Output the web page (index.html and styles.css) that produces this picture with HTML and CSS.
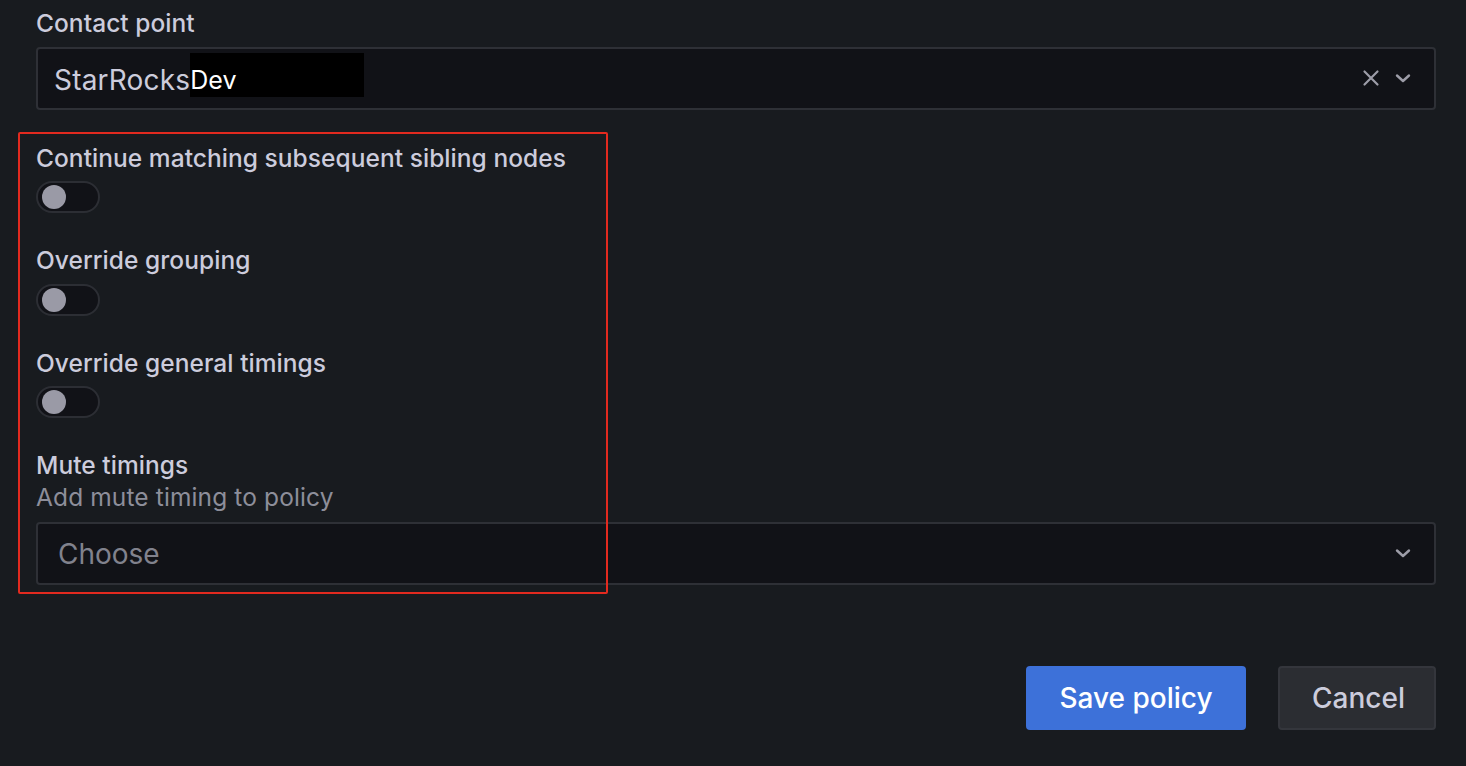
FILE: index.html
```html
<!DOCTYPE html>
<html lang="en">
<head>
<meta charset="utf-8">
<title>Notification policy</title>
<link rel="stylesheet" href="styles.css">
</head>
<body>
<div class="page">
  <form class="form">
    <div class="field field-contact">
      <label class="label">Contact point</label>
      <div class="select">
        <div class="select-value"><span class="value-text">StarRocks</span><span class="redact">Dev</span></div>
        <div class="select-icons">
          <svg class="icon-x" width="18" height="18" viewBox="0 0 18 18"><path d="M2.5 2.5 L15.5 15.5 M15.5 2.5 L2.5 15.5" stroke="#9d9da8" stroke-width="2.2" stroke-linecap="round" fill="none"/></svg>
          <svg class="icon-chev" width="18" height="18" viewBox="0 0 18 18"><path d="M3 6.5 L9 12 L15 6.5" stroke="#9d9da8" stroke-width="2.4" stroke-linecap="round" stroke-linejoin="round" fill="none"/></svg>
        </div>
      </div>
    </div>

    <div class="field">
      <label class="label">Continue matching subsequent sibling nodes</label>
      <div class="switch"><span class="knob"></span></div>
    </div>

    <div class="field">
      <label class="label">Override grouping</label>
      <div class="switch"><span class="knob"></span></div>
    </div>

    <div class="field">
      <label class="label">Override general timings</label>
      <div class="switch"><span class="knob"></span></div>
    </div>

    <div class="field field-mute">
      <label class="label label-tight">Mute timings</label>
      <div class="description">Add mute timing to policy</div>
      <div class="select">
        <div class="select-value placeholder">Choose</div>
        <div class="select-icons">
          <svg class="icon-chev" width="18" height="18" viewBox="0 0 18 18"><path d="M3 6.5 L9 12 L15 6.5" stroke="#9d9da8" stroke-width="2.4" stroke-linecap="round" stroke-linejoin="round" fill="none"/></svg>
        </div>
      </div>
    </div>

    <div class="actions">
      <button type="button" class="btn btn-primary">Save policy</button>
      <button type="button" class="btn btn-secondary">Cancel</button>
    </div>
  </form>
  <div class="annotation"></div>
</div>
</body>
</html>
```

FILE: styles.css
```css
* { box-sizing: border-box; }

html, body {
  margin: 0;
  padding: 0;
  background: #181b1f;
}

body {
  font-family: Inter, "Noto Sans", sans-serif;
  color: #ccccdc;
  width: 1466px;
  height: 766px;
  overflow: hidden;
}

.page {
  position: relative;
  padding: 8px 30px 0 36px;
}

.form {
  display: flex;
  flex-direction: column;
}

.field {
  display: flex;
  flex-direction: column;
  align-items: flex-start;
  margin-bottom: 32px;
}

.field-contact { margin-bottom: 33px; }

.field-mute { margin-bottom: 0; }

.label {
  font-size: 24.5px;
  font-weight: 500;
  line-height: 30.6px;
  letter-spacing: 0.05px;
  color: #ccccdc;
  margin-bottom: 8px;
}

.label-tight { margin-bottom: 1px; }

.description {
  font-size: 24.5px;
  font-weight: 400;
  line-height: 30.6px;
  letter-spacing: 0.12px;
  color: #8d8e9a;
  margin-bottom: 9px;
}

.select {
  align-self: stretch;
  height: 63px;
  background: #111217;
  border: 2px solid #2e3036;
  border-radius: 4px;
  display: flex;
  align-items: center;
  justify-content: space-between;
  padding: 0 22px 0 16px;
}

.select-value {
  font-size: 28px;
  line-height: 34px;
  color: #ccccdc;
  display: flex;
  align-items: flex-start;
  padding-top: 3px;
}

.value-text { letter-spacing: 0.2px; }

.select-value.placeholder {
  color: #81828d;
  padding-left: 4px;
  padding-top: 1px;
}

.redact {
  display: inline-flex;
  align-items: center;
  background: #000;
  color: #fff;
  font-family: Inter, "Noto Sans", sans-serif;
  font-size: 25px;
  line-height: 28px;
  width: 174px;
  height: 44px;
  margin-top: -10px;
  padding-top: 10px;
}

.select-icons {
  display: flex;
  align-items: center;
  gap: 14px;
}

.switch {
  width: 64px;
  height: 32px;
  border-radius: 16px;
  background: #111217;
  border: 2px solid #2c2e34;
  display: flex;
  align-items: center;
  padding-left: 4px;
}

.knob {
  width: 24px;
  height: 24px;
  border-radius: 50%;
  background: #9a9aa6;
}

.actions {
  display: flex;
  justify-content: flex-end;
  gap: 32px;
  margin-top: 81px;
}

.btn {
  font-family: Inter, "Noto Sans", sans-serif;
  font-size: 28px;
  font-weight: 500;
  height: 64px;
  padding: 0 32px;
  border-radius: 4px;
  cursor: pointer;
}

.btn-primary {
  background: #3d71d9;
  color: #ffffff;
  border: none;
  width: 220px;
}

.btn-secondary {
  background: #2b2d32;
  color: #ccccdc;
  border: 2px solid #34363c;
  width: 158px;
}

.annotation {
  position: absolute;
  left: 18px;
  top: 132px;
  width: 590px;
  height: 462px;
  border: 2px solid #e22a1f;
  border-radius: 2px;
  pointer-events: none;
}
```
